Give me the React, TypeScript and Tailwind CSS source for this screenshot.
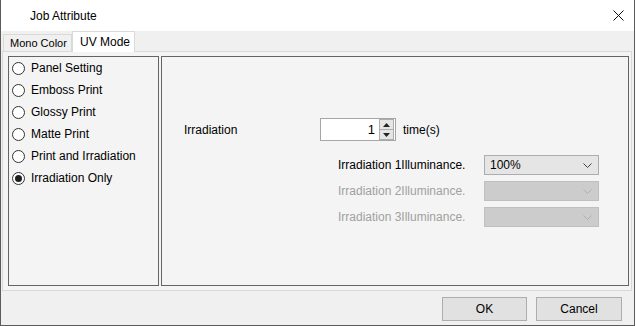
const modes = [
  "Panel Setting",
  "Emboss Print",
  "Glossy Print",
  "Matte Print",
  "Print and Irradiation",
  "Irradiation Only",
];

const Radio = ({ label, checked }: { label: string; checked?: boolean }) => (
  <div className="flex h-[22px] items-center gap-[6px] pl-[3px]">
    <span className="flex h-[13px] w-[13px] items-center justify-center rounded-full border border-[#333333] bg-white">
      {checked && <span className="h-[7px] w-[7px] rounded-full bg-[#1f1f1f]" />}
    </span>
    <span>{label}</span>
  </div>
);

const Chevron = ({ color }: { color: string }) => (
  <svg width="9" height="5" viewBox="0 0 9 5" fill="none">
    <path d="M0.5 0.5 L4.5 4.5 L8.5 0.5" stroke={color} strokeWidth="1" />
  </svg>
);

const SelectRow = ({
  label,
  value,
  disabled,
}: {
  label: string;
  value?: string;
  disabled?: boolean;
}) => (
  <div className="flex h-[20px] items-center">
    <span
      className={`w-[146px] ${disabled ? "text-[#a0a0a0]" : "text-black"}`}
    >
      {label}
    </span>
    <div
      className={`flex h-[20px] w-[115px] items-center justify-between border pl-[5px] pr-[6px] ${
        disabled
          ? "border-[#bfbfbf] bg-[#cccccc]"
          : "border-[#adadad] bg-[#e5e5e5]"
      }`}
    >
      <span>{value}</span>
      <Chevron color={disabled ? "#b0b0b0" : "#444444"} />
    </div>
  </div>
);

const SpinBox = () => (
  <div className="flex h-[23px] w-[76px] items-center border border-[#a6a6a6] bg-white">
    <span className="flex-1 pr-[4px] text-right text-[13px]">1</span>
    <div className="mr-[1px] flex h-[21px] w-[15px] flex-col">
      <div className="flex flex-1 items-center justify-center border border-[#adadad] bg-[#e5e5e5]">
        <svg width="7" height="4" viewBox="0 0 7 4">
          <path d="M0 4 L3.5 0 L7 4 Z" fill="#222" />
        </svg>
      </div>
      <div className="flex flex-1 items-center justify-center border border-t-0 border-[#adadad] bg-[#e5e5e5]">
        <svg width="7" height="4" viewBox="0 0 7 4">
          <path d="M0 0 L3.5 4 L7 0 Z" fill="#222" />
        </svg>
      </div>
    </div>
  </div>
);

const App = () => {
  return (
    <div className="h-[326px] w-[636px] bg-white font-['Liberation_Sans',sans-serif] text-[12px] text-black">
      <div className="flex h-full w-[635px] flex-col border-x border-b border-[#5b5b5b] bg-[#f0f0f0]">
        {/* title bar */}
        <div className="flex h-[31px] items-center justify-between bg-white pl-[29px] pr-[8px]">
          <span className="text-[12px]">Job Attribute</span>
          <svg width="11" height="11" viewBox="0 0 11 11" className="mr-[2px]">
            <path d="M0.5 0.5 L10.5 10.5 M10.5 0.5 L0.5 10.5" stroke="#111" strokeWidth="1" />
          </svg>
        </div>

        {/* tabs */}
        <div className="flex h-[20px] items-end pl-[2px]">
          <div className="flex h-[17px] w-[69px] items-center whitespace-nowrap border border-b-0 border-[#d9d9d9] bg-[#f0f0f0] pl-[6px] text-[11px]">
            Mono Color
          </div>
          <div className="relative z-10 -mb-px flex h-[21px] w-[63px] items-center whitespace-nowrap border border-b-0 border-[#d9d9d9] bg-white pl-[7px]">
            UV Mode
          </div>
        </div>

        {/* tab page */}
        <div className="ml-[1px] flex h-[240px] w-[630px] gap-[2px] border border-[#d9d9d9] bg-[#f4f4f4] pb-[4px] pl-[5px] pr-[2px] pt-[4px]">
          <div className="flex h-[230px] w-[151px] flex-col border border-[#646464]">
            {modes.map((m) => (
              <Radio key={m} label={m} checked={m === "Irradiation Only"} />
            ))}
          </div>
          <div className="flex h-[230px] flex-1 flex-col border border-[#646464] pt-[61px]">
            <div className="flex items-center pl-[22px]">
              <span className="w-[136px]">Irradiation</span>
              <SpinBox />
              <span className="ml-[7px]">time(s)</span>
            </div>
            <div className="mt-[14px] flex flex-col gap-[6px] pl-[176px]">
              <SelectRow label="Irradiation 1Illuminance." value="100%" />
              <SelectRow label="Irradiation 2Illuminance." disabled />
              <SelectRow label="Irradiation 3Illuminance." disabled />
            </div>
          </div>
        </div>

        {/* buttons */}
        <div className="flex flex-1 items-start justify-end gap-[9px] pr-[12px] pt-[6px]">
          <button className="h-[24px] w-[85px] border border-[#adadad] bg-[#e1e1e1]">
            OK
          </button>
          <button className="h-[24px] w-[86px] border border-[#adadad] bg-[#e1e1e1]">
            Cancel
          </button>
        </div>
      </div>
    </div>
  );
};

export default App;
